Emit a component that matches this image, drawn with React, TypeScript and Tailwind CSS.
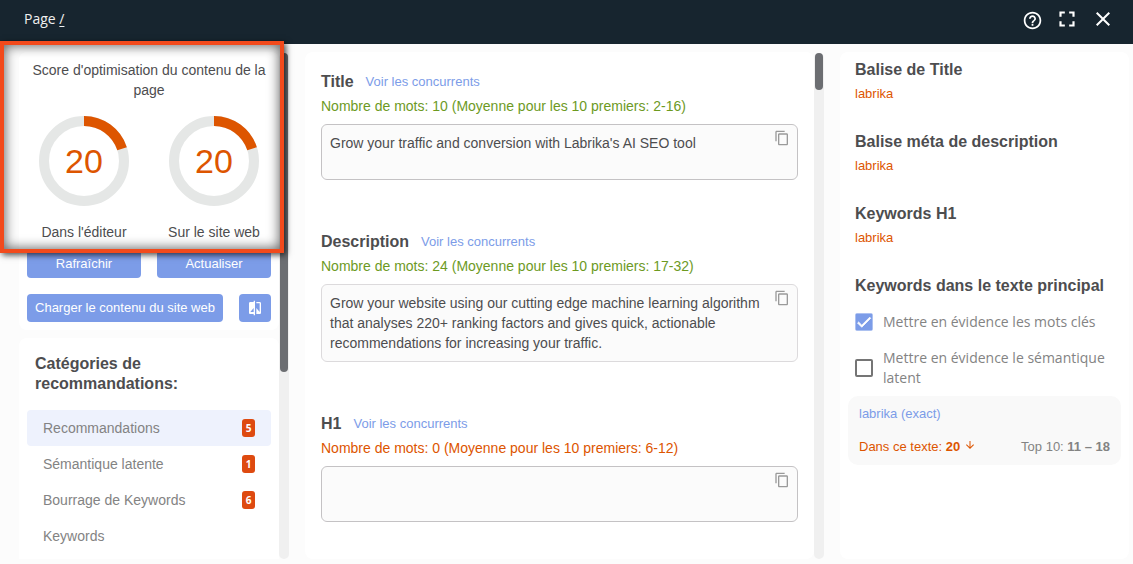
import { useState } from 'react';
import {
  MdArrowDownward,
  MdCheck,
  MdClose,
  MdCompare,
  MdContentCopy,
  MdFullscreen,
  MdHelpOutline,
} from 'react-icons/md';

const categories = [
  { label: 'Recommandations', count: 5 },
  { label: 'Sémantique latente', count: 1 },
  { label: 'Bourrage de Keywords', count: 6 },
  { label: 'Keywords', count: 0 },
];

const fields = [
  {
    id: 'title',
    label: 'Title',
    hint: 'Nombre de mots: 10 (Moyenne pour les 10 premiers: 2-16)',
    ok: true,
    rows: 1,
    border: 'border-[#c4c2c4]',
    text: "Grow your traffic and conversion with Labrika's AI SEO tool",
  },
  {
    id: 'description',
    label: 'Description',
    hint: 'Nombre de mots: 24 (Moyenne pour les 10 premiers: 17-32)',
    ok: true,
    rows: 3,
    border: 'border-[#dcdadc]',
    text: 'Grow your website using our cutting edge machine learning algorithm that analyses 220+ ranking factors and gives quick, actionable recommendations for increasing your traffic.',
  },
  {
    id: 'h1',
    label: 'H1',
    hint: 'Nombre de mots: 0 (Moyenne pour les 10 premiers: 6-12)',
    ok: false,
    rows: 1,
    border: 'border-[#c4c2c4]',
    text: '',
  },
];

const tags = ['Balise de Title', 'Balise méta de description', 'Keywords H1'];

const buttonClass =
  'flex h-7 items-center justify-center rounded bg-[#7c9ce8] text-[13px] whitespace-nowrap text-white';

const Gauge = ({ value, label }: { value: number; label: string }) => (
  <div className="flex flex-1 flex-col items-center gap-4">
    <div className="relative">
      <svg width="90" height="90" viewBox="0 0 90 90">
        <circle cx="45" cy="45" r="40" fill="none" stroke="#e5e7e6" strokeWidth="10" />
        <circle
          cx="45"
          cy="45"
          r="40"
          fill="none"
          stroke="#dd5500"
          strokeWidth="10"
          pathLength="100"
          strokeDasharray={`${value} 100`}
          transform="rotate(-90 45 45)"
        />
      </svg>
      <span className="absolute inset-0 flex items-center justify-center text-[34px] text-[#dd5500]">
        {value}
      </span>
    </div>
    <span className="text-sm">{label}</span>
  </div>
);

const Scrollbar = ({ thumb }: { thumb: string }) => (
  <div className="mt-px w-[10px] shrink-0 rounded-full bg-[#f0f0f0] px-px">
    <div className={`rounded-full bg-[#6c6e72] ${thumb}`} />
  </div>
);

const Header = () => (
  <header className="flex h-11 shrink-0 items-center justify-between bg-[#17252f] pr-[18px] pb-1.5 pl-6 text-white">
    <p className="font-['Open_Sans','Noto_Sans',sans-serif] text-sm text-[#f0f0f0]">
      Page{' '}
      <a href="#" className="underline underline-offset-2">
        /
      </a>
    </p>
    <div className="flex items-center gap-3">
      <button aria-label="Aide">
        <MdHelpOutline size={21} className="mt-0.5" />
      </button>
      <button aria-label="Plein écran">
        <MdFullscreen size={26} className="-m-px" />
      </button>
      <button aria-label="Fermer">
        <MdClose size={24} />
      </button>
    </div>
  </header>
);

const Sidebar = () => {
  const [active, setActive] = useState('Recommandations');

  return (
    <aside className="flex w-[270px] shrink-0">
      <div className="flex min-w-0 flex-1 flex-col gap-2 overflow-hidden">
        <section className="shrink-0 rounded-lg bg-white p-2">
          <h2 className="text-center text-sm">
            Score d'optimisation du contenu de la page
          </h2>
          <div className="mt-4 flex gap-4">
            <Gauge value={20} label="Dans l'éditeur" />
            <Gauge value={20} label="Sur le site web" />
          </div>
          <div className="mt-2 flex gap-4">
            <button className={`${buttonClass} flex-1`}>Rafraîchir</button>
            <button className={`${buttonClass} flex-1`}>Actualiser</button>
          </div>
          <div className="mt-4 flex gap-4">
            <button className={`${buttonClass} flex-1`}>
              Charger le contenu du site web
            </button>
            <button className={`${buttonClass} w-8`} aria-label="Comparer">
              <MdCompare size={16} />
            </button>
          </div>
        </section>

        <section className="flex-1 rounded-t-lg bg-white px-2 pt-4">
          <h2 className="px-2 text-base leading-5 font-bold">
            Catégories de recommandations:
          </h2>
          <ul className="mt-4">
            {categories.map((item) => (
              <li key={item.label}>
                <button
                  onClick={() => setActive(item.label)}
                  className={`flex h-9 w-full items-center justify-between rounded px-4 text-sm text-[#838383] ${
                    active === item.label ? 'bg-[#eef2fd]' : ''
                  }`}
                >
                  {item.label}
                  {item.count > 0 && (
                    <span className="flex h-[18px] w-[13px] items-center justify-center rounded-[3px] bg-[#de4a10] font-['Noto_Sans',sans-serif] text-[10px] font-bold text-white">
                      {item.count}
                    </span>
                  )}
                </button>
              </li>
            ))}
          </ul>
        </section>
      </div>
      <Scrollbar thumb="h-[319px]" />
    </aside>
  );
};

const Editor = () => (
  <div className="flex min-w-0 flex-1">
    <div className="flex min-w-0 flex-1 flex-col gap-[52px] overflow-hidden rounded-lg bg-white px-4 pt-5">
      {fields.map((field) => (
        <section key={field.id}>
          <div className="flex items-center gap-3">
            <label htmlFor={field.id} className="text-base leading-5 font-bold">
              {field.label}
            </label>
            <a href="#" className="text-[13px] leading-5 text-[#7c9ce8]">
              Voir les concurrents
            </a>
          </div>
          <p
            className={`mt-1 text-sm ${
              field.ok ? 'text-[#6d9a1f]' : 'text-[#dd5500]'
            }`}
          >
            {field.hint}
          </p>
          <div className="relative mt-2">
            <textarea
              id={field.id}
              rows={field.rows}
              defaultValue={field.text}
              className={`block min-h-14 w-full resize-none overflow-hidden rounded-md border bg-[#fbfbfb] py-2 pr-8 pl-2 text-sm leading-5 outline-none ${field.border}`}
            />
            <button
              aria-label="Copier"
              className="absolute top-1.5 right-2 text-[#9a9a9a]"
            >
              <MdContentCopy size={16} />
            </button>
          </div>
        </section>
      ))}
    </div>
    <Scrollbar thumb="h-[37px]" />
  </div>
);

const Checkbox = ({ label, checked }: { label: string; checked?: boolean }) => (
  <label className="flex items-center gap-[10px] font-['Open_Sans','Noto_Sans',sans-serif] text-sm text-[#838383]">
    <span className="relative flex shrink-0">
      <input
        type="checkbox"
        defaultChecked={checked}
        className="peer size-[18px] appearance-none rounded-xs border-2 border-[#757575] bg-white checked:border-[#7c9ce8] checked:bg-[#7c9ce8]"
      />
      <MdCheck
        size={18}
        className="pointer-events-none absolute inset-0 hidden stroke-white stroke-1 text-white peer-checked:block"
      />
    </span>
    {label}
  </label>
);

const Keywords = () => (
  <div className="w-[289px] shrink-0 overflow-hidden rounded-lg bg-white px-2 pt-2">
    <div className="px-[7px]">
      {tags.map((tag) => (
        <section key={tag} className="mb-7">
          <h2 className="text-base leading-5 font-bold">{tag}</h2>
          <p className="mt-1 text-[13px] leading-5 text-[#dd5500]">labrika</p>
        </section>
      ))}
      <h2 className="text-base leading-5 font-bold">
        Keywords dans le texte principal
      </h2>
      <div className="mt-4 flex flex-col gap-4">
        <Checkbox label="Mettre en évidence les mots clés" checked />
        <Checkbox label="Mettre en évidence le sémantique latent" />
      </div>
    </div>
    <div className="mt-2 rounded-[10px] bg-[#f9f9f9] px-[11px] py-2 text-[13px] leading-5">
      <a href="#" className="text-[#7c9ce8]">
        labrika (exact)
      </a>
      <div className="mt-[13px] flex items-center justify-between">
        <span className="flex items-center gap-1 text-[#dd5500]">
          <span>
            Dans ce texte: <b>20</b>
          </span>
          <MdArrowDownward size={12} className="-mt-1" />
        </span>
        <span className="text-[#838383]">
          Top 10: <b>11 – 18</b>
        </span>
      </div>
    </div>
  </div>
);

const App = () => (
  <div className="flex h-screen flex-col overflow-hidden bg-[#fcfcfc] font-['Liberation_Sans',Arial,sans-serif] text-[#4d4d4f]">
    <Header />
    <main className="relative flex min-h-0 flex-1 gap-4 pt-2 pr-1 pb-[5px] pl-[19px]">
      <Sidebar />
      <Editor />
      <Keywords />
      {/* highlight frame around the score block */}
      <div className="pointer-events-none absolute -top-[3px] left-0 h-[212px] w-[284px] border-4 border-[#f24a1c] shadow-[2px_2px_6px_rgba(0,0,0,0.7),inset_0_0_12px_1px_rgba(0,0,0,0.6)]" />
    </main>
  </div>
);

export default App;
